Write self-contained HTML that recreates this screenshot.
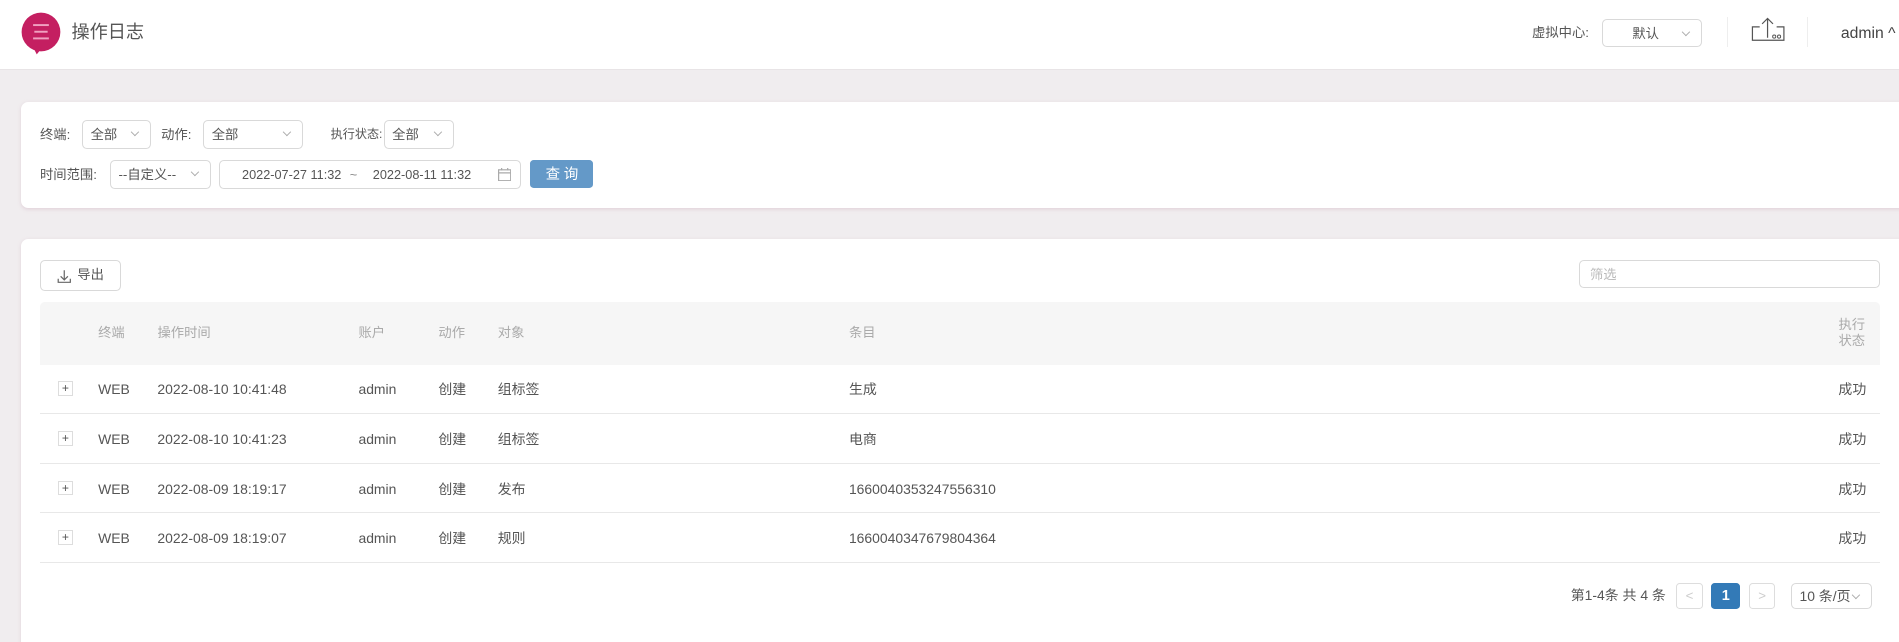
<!DOCTYPE html>
<html><head><meta charset="utf-8">
<style>
*{box-sizing:border-box;margin:0;padding:0}
html,body{width:1899px;height:642px;overflow:hidden;background:#f0edef}
body{font-family:"Liberation Sans","Noto Sans CJK SC",sans-serif;color:#555;font-size:11.5px;line-height:14px}
#w{zoom:1.2111;width:1568px;height:530px;position:relative;overflow:hidden;background:#f0edef}
.a{position:absolute;white-space:nowrap}
.hdr{left:0;top:0;width:1568px;height:58px;background:#fff;border-bottom:1px solid #e8e4e6}
.sel{position:absolute;border:1px solid #d9d9d9;border-radius:4px;background:#fff;height:24px;line-height:23px;padding-left:6px;font-size:11px;color:#555;white-space:nowrap}
.sel:after{content:"";position:absolute;right:10px;top:7px;width:4px;height:4px;border-right:1px solid #aaa;border-bottom:1px solid #aaa;transform:rotate(45deg)}
.card{background:#fff;border-radius:6px;box-shadow:0 1px 3px rgba(200,160,180,.35)}
.lbl{position:absolute;font-size:11px;color:#555;line-height:24px;white-space:nowrap}
.th{position:absolute;color:#aaa;font-size:11px;line-height:14px}
.row{position:absolute;left:33px;width:1519px;height:41px;border-bottom:1px solid #e8e8e8}
.row span{position:absolute;top:14px;font-size:11.5px;line-height:14px;color:#555;white-space:nowrap}
.plus{position:absolute;left:15px;top:14px;width:12px;height:12px;border:1px solid #ddd;font-size:10px;line-height:10px;text-align:center;color:#555}
.pb{position:absolute;top:481px;height:22px;border:1px solid #ddd;border-radius:3px;background:#fff;text-align:center;line-height:20px;color:#ccc;font-size:11px}
</style></head><body><div id="w">
<div class="a hdr">
  <svg class="a" style="left:17px;top:10px" width="34" height="36" viewBox="0 0 34 36">
    <circle cx="16.5" cy="16.5" r="16" fill="#c41f61"/>
    <path d="M9 27 L17 30 L13 35 Z" fill="#c41f61"/>
    <rect x="10" y="10" width="13" height="1.6" fill="#f0a0c0"/>
    <rect x="11" y="15.5" width="11" height="1.6" fill="#f0a0c0"/>
    <rect x="10" y="21" width="13" height="1.6" fill="#f0a0c0"/>
  </svg>
  <div class="a" style="left:59px;top:18px;font-size:15px;line-height:18px;color:#555">操作日志</div>
  <div class="a" style="left:1265px;top:21px;font-size:11px;color:#555">虚拟中心:</div>
  <div class="sel" style="left:1323px;top:16px;width:82px;height:23px;padding-left:24px">默认</div>
  <div class="a" style="left:1426px;top:14px;width:1px;height:25px;background:#eee"></div>
  <svg class="a" style="left:1445px;top:13px" width="30" height="22" viewBox="0 0 30 22">
    <path d="M14.5 18V2M10 6.5L14.5 2L19 6.5M8 9H2V20H28V9H22" fill="none" stroke="#555" stroke-width="1"/>
    <circle cx="20" cy="17" r="1.3" fill="none" stroke="#555" stroke-width=".8"/>
    <circle cx="24" cy="17" r="1.3" fill="none" stroke="#555" stroke-width=".8"/>
  </svg>
  <div class="a" style="left:1492px;top:14px;width:1px;height:25px;background:#eee"></div>
  <div class="a" style="left:1520px;top:20px;font-size:13px;line-height:16px;color:#444">admin ^</div>
</div>

<div class="a card" style="left:17px;top:84px;width:1560px;height:88px"></div>
<div class="lbl" style="left:33px;top:99px">终端:</div>
<div class="sel" style="left:68px;top:99px;width:57px">全部</div>
<div class="lbl" style="left:133px;top:99px">动作:</div>
<div class="sel" style="left:168px;top:99px;width:82px">全部</div>
<div class="lbl" style="left:273px;top:99px;font-size:10px">执行状态:</div>
<div class="sel" style="left:317px;top:99px;width:58px">全部</div>
<div class="lbl" style="left:33px;top:132px">时间范围:</div>
<div class="sel" style="left:91px;top:132px;width:83px">--自定义--</div>
<div class="a" style="left:181px;top:132px;width:249px;height:24px;border:1px solid #d9d9d9;border-radius:4px;background:#fff">
  <span class="a" style="left:18px;top:5px;font-size:10.5px">2022-07-27 11:32</span>
  <span class="a" style="left:107px;top:5px;font-size:10.5px;color:#888">~</span>
  <span class="a" style="left:126px;top:5px;font-size:10.5px">2022-08-11 11:32</span>
  <svg class="a" style="left:229px;top:6px" width="11" height="11" viewBox="0 0 11 11"><rect x=".5" y="1.5" width="10" height="9" fill="none" stroke="#aaa"/><path d="M.5 4H10.5M3 0V2M8 0V2" stroke="#aaa"/></svg>
</div>
<div class="a" style="left:438px;top:132px;width:52px;height:23px;background:#6499c8;border-radius:3px;color:#fff;text-align:center;line-height:25px;font-size:12px;letter-spacing:3px;padding-left:3px">查询</div>

<div class="a card" style="left:17px;top:197px;width:1560px;height:345px"></div>
<div class="a" style="left:33px;top:215px;width:67px;height:25px;border:1px solid #d9d9d9;border-radius:4px;background:#fff">
  <svg class="a" style="left:13px;top:6px" width="12" height="12" viewBox="0 0 12 12"><path d="M6 1V9M3 6L6 9L9 6M1 8V11H11V8" fill="none" stroke="#666"/></svg>
  <span class="a" style="left:30px;top:5px;font-size:11px">导出</span>
</div>
<div class="a" style="left:1304px;top:215px;width:248px;height:23px;border:1px solid #d9d9d9;border-radius:4px;background:#fff;color:#bbb;padding-left:8px;line-height:23px;font-size:11px">筛选</div>

<div class="a" style="left:33px;top:249px;width:1519px;height:52px;background:#f6f6f6;border-radius:4px 4px 0 0"></div>
<div class="th" style="left:81px;top:268px">终端</div>
<div class="th" style="left:130px;top:268px">操作时间</div>
<div class="th" style="left:296px;top:268px">账户</div>
<div class="th" style="left:362px;top:268px">动作</div>
<div class="th" style="left:411px;top:268px">对象</div>
<div class="th" style="left:701px;top:268px">条目</div>
<div class="th" style="left:1518px;top:262px;line-height:13px">执行<br>状态</div>

<div class="row" style="top:301px"><div class="plus">+</div><span style="left:48px">WEB</span><span style="left:97px">2022-08-10 10:41:48</span><span style="left:263px">admin</span><span style="left:329px">创建</span><span style="left:378px">组标签</span><span style="left:668px">生成</span><span style="left:1485px">成功</span></div>
<div class="row" style="top:342px"><div class="plus">+</div><span style="left:48px">WEB</span><span style="left:97px">2022-08-10 10:41:23</span><span style="left:263px">admin</span><span style="left:329px">创建</span><span style="left:378px">组标签</span><span style="left:668px">电商</span><span style="left:1485px">成功</span></div>
<div class="row" style="top:383px"><div class="plus">+</div><span style="left:48px">WEB</span><span style="left:97px">2022-08-09 18:19:17</span><span style="left:263px">admin</span><span style="left:329px">创建</span><span style="left:378px">发布</span><span style="left:668px">1660040353247556310</span><span style="left:1485px">成功</span></div>
<div class="row" style="top:424px"><div class="plus">+</div><span style="left:48px">WEB</span><span style="left:97px">2022-08-09 18:19:07</span><span style="left:263px">admin</span><span style="left:329px">创建</span><span style="left:378px">规则</span><span style="left:668px">1660040347679804364</span><span style="left:1485px">成功</span></div>

<div class="a" style="left:1297px;top:485px;font-size:11.5px;color:#555">第1-4条 共 4 条</div>
<div class="pb" style="left:1384px;width:22px">&lt;</div>
<div class="pb" style="left:1413px;width:24px;background:#337ab7;border-color:#337ab7;color:#fff;font-weight:bold;font-size:12px">1</div>
<div class="pb" style="left:1444px;width:22px">&gt;</div>
<div class="sel" style="left:1479px;top:481px;width:67px;height:22px;line-height:21px;font-size:11.5px">10 条/页</div>
</div></body></html>
